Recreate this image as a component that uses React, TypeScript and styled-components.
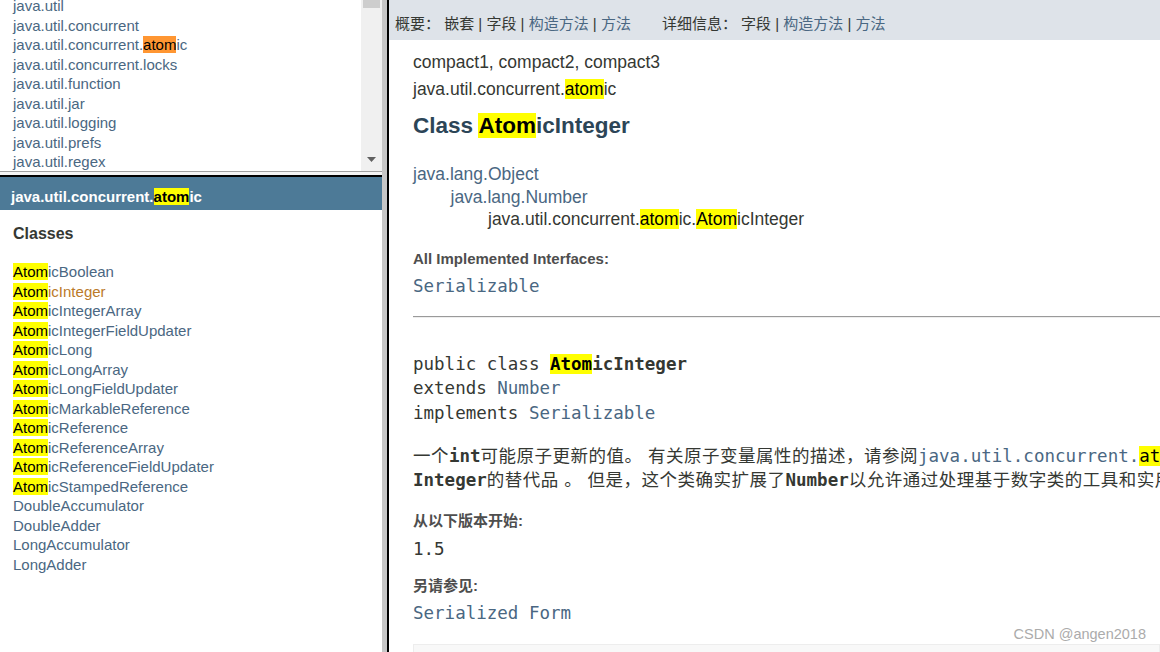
import React from "react";
import styled, { createGlobalStyle } from "styled-components";

const GlobalStyle = createGlobalStyle`
  html, body { margin: 0; padding: 0; background: #ffffff; }
  body {
    font-family: "Liberation Sans", Arial, "Noto Sans CJK SC", sans-serif;
    overflow: hidden;
  }
  #root { width: 1160px; height: 652px; }
`;

const SANS = `"Liberation Sans", Arial, "Noto Sans CJK SC", sans-serif`;
const MONO = `"DejaVu Sans Mono", "Noto Sans CJK SC", monospace`;
const LINK = "#4A6782";
const TEXT = "#353833";

const Page = styled.div`
  display: flex;
  width: 1160px;
  height: 652px;
  overflow: hidden;
  font-family: ${SANS};
`;

/* ---------- left frames ---------- */

const LeftFrame = styled.div`
  width: 382px;
  flex: none;
  display: flex;
  flex-direction: column;
`;

const TopFrame = styled.div`
  height: 171px;
  flex: none;
  display: flex;
  overflow: hidden;
  border-bottom: 1px solid #a0a0a0;
  background: #ffffff;
`;

const PkgList = styled.ul`
  list-style: none;
  margin: -4px 0 0;
  padding: 0 0 0 13px;
  flex: 1;
  min-width: 0;
`;

const PkgItem = styled.li`
  font-size: 15px;
  line-height: 19.5px;
  color: ${LINK};
  white-space: nowrap;
`;

const ScrollTrack = styled.div`
  width: 21px;
  flex: none;
  background: #f0f0f0;
  display: flex;
  flex-direction: column;
  justify-content: space-between;
  align-items: center;
`;

const ScrollThumb = styled.div`
  width: 17px;
  height: 8px;
  background: #cdcdcd;
`;

const ScrollArrow = styled.div`
  height: 21px;
  width: 21px;
  display: flex;
  align-items: center;
  justify-content: center;
  padding-bottom: 3px;
  box-sizing: border-box;
`;

const HSplit = styled.div`
  height: 3px;
  flex: none;
  background: #f4f4f4;
  border-bottom: 2px solid #000000;
`;

const BottomFrame = styled.div`
  flex: 1;
  background: #ffffff;
  overflow: hidden;
`;

const FrameHeader = styled.div`
  height: 33px;
  box-sizing: border-box;
  background: #4d7a97;
  color: #ffffff;
  font-weight: bold;
  font-size: 15px;
  line-height: 18px;
  padding: 11px 0 0 11px;
  white-space: nowrap;
`;

const ClassesTitle = styled.h2`
  margin: 14px 0 0 13px;
  font-size: 16px;
  line-height: 20px;
  font-weight: bold;
  color: ${TEXT};
`;

const ClassList = styled.ul`
  list-style: none;
  margin: 18px 0 0;
  padding: 0 0 0 13px;
`;

const ClassItem = styled.li<{ $current?: boolean }>`
  font-size: 15px;
  line-height: 19.5px;
  color: ${(p) => (p.$current ? "#bb7a2a" : LINK)};
  white-space: nowrap;
`;

const VSplit = styled.div`
  width: 5px;
  flex: none;
  background: #c6c6c6;
  border-right: 2px solid #000000;
`;

/* ---------- right frame ---------- */

const RightFrame = styled.div`
  flex: 1;
  min-width: 0;
  overflow: hidden;
  position: relative;
  background: #ffffff;
`;

const SubNav = styled.div`
  height: 40px;
  box-sizing: border-box;
  background: #dee3e9;
  padding: 15px 0 0 6px;
  font-size: 15px;
  line-height: 18px;
  color: ${TEXT};
  white-space: nowrap;
  display: flex;
  gap: 31px;
`;

const NavGroup = styled.div`
  display: flex;
`;

const NavLink = styled.span<{ $link?: boolean }>`
  color: ${(p) => (p.$link ? LINK : TEXT)};
`;

const Content = styled.div`
  padding-left: 24px;
  white-space: nowrap;
`;

const SubTitle = styled.div<{ $gap: number }>`
  margin-top: ${(p) => p.$gap}px;
  font-size: 17.5px;
  line-height: 20px;
  color: ${TEXT};
`;

const Title = styled.h2`
  margin: 14px 0 0;
  font-size: 22.5px;
  line-height: 26px;
  font-weight: bold;
  color: #2c4557;
`;

const Tree = styled.div`
  margin-top: 24px;
  font-size: 17.5px;
  line-height: 22.5px;
`;

const TreeLine = styled.div<{ $level: number; $link?: boolean }>`
  padding-left: ${(p) => p.$level * 37.5}px;
  color: ${(p) => (p.$link ? LINK : TEXT)};
`;

const Term = styled.div<{ $gap: number }>`
  margin-top: ${(p) => p.$gap}px;
  font-size: 15px;
  line-height: 18px;
  font-weight: bold;
  color: #4e4e4e;
`;

const Def = styled.div<{ $gap: number; $link?: boolean }>`
  margin-top: ${(p) => p.$gap}px;
  font-family: ${MONO};
  font-size: 17.5px;
  line-height: 22px;
  color: ${(p) => (p.$link ? LINK : TEXT)};
`;

const Rule = styled.hr`
  margin: 19px 0 0;
  height: 0;
  border: none;
  border-top: 1px solid #9a9a9a;
  border-bottom: 1px solid #eeeeee;
`;

const Pre = styled.pre`
  margin: 34px 0 0;
  font-family: ${MONO};
  font-size: 17.5px;
  line-height: 24.5px;
  color: ${TEXT};
`;

const Strong = styled.b`
  font-weight: bold;
`;

const CodeLink = styled.span`
  color: ${LINK};
`;

const Block = styled.div`
  margin-top: 19px;
  font-size: 17.5px;
  line-height: 24px;
  letter-spacing: 0.5px;
  color: ${TEXT};
  font-family: ${SANS};
`;

const BlockLine = styled.div`
  white-space: nowrap;
`;

const Code = styled.code<{ $link?: boolean }>`
  font-family: ${MONO};
  font-size: 17.5px;
  letter-spacing: 0;
  font-weight: ${(p) => (p.$link ? "normal" : "bold")};
  color: ${(p) => (p.$link ? LINK : TEXT)};
`;

const SummaryBox = styled.div`
  margin-top: 20px;
  height: 60px;
  background: #f8f8f8;
  border: 1px solid #ededed;
`;

const Watermark = styled.div`
  position: absolute;
  right: 14px;
  top: 625px;
  font-size: 14.5px;
  line-height: 18px;
  color: #ababab;
  white-space: nowrap;
`;

const Mark = styled.span<{ $active?: boolean }>`
  background: ${(p) => (p.$active ? "#ff9632" : "#ffff00")};
  color: #000000;
`;

const packages = [
  "java.util",
  "java.util.concurrent",
  "ATOMIC",
  "java.util.concurrent.locks",
  "java.util.function",
  "java.util.jar",
  "java.util.logging",
  "java.util.prefs",
  "java.util.regex",
];

const atomicClasses = [
  "Boolean",
  "Integer",
  "IntegerArray",
  "IntegerFieldUpdater",
  "Long",
  "LongArray",
  "LongFieldUpdater",
  "MarkableReference",
  "Reference",
  "ReferenceArray",
  "ReferenceFieldUpdater",
  "StampedReference",
];

const otherClasses = ["DoubleAccumulator", "DoubleAdder", "LongAccumulator", "LongAdder"];

export default function App() {
  return (
    <>
      <GlobalStyle />
      <Page>
        <LeftFrame>
          <TopFrame>
            <PkgList>
              {packages.map((p) =>
                p === "ATOMIC" ? (
                  <PkgItem key={p}>
                    java.util.concurrent.<Mark $active>atom</Mark>ic
                  </PkgItem>
                ) : (
                  <PkgItem key={p}>{p}</PkgItem>
                )
              )}
            </PkgList>
            <ScrollTrack>
              <ScrollThumb />
              <ScrollArrow>
                <svg width="9" height="5" viewBox="0 0 9 5">
                  <path d="M0 0 H9 L4.5 5 Z" fill="#606060" />
                </svg>
              </ScrollArrow>
            </ScrollTrack>
          </TopFrame>
          <HSplit />
          <BottomFrame>
            <FrameHeader>
              java.util.concurrent.<Mark>atom</Mark>ic
            </FrameHeader>
            <ClassesTitle>Classes</ClassesTitle>
            <ClassList>
              {atomicClasses.map((c) => (
                <ClassItem key={c} $current={c === "Integer"}>
                  <Mark>Atom</Mark>ic{c}
                </ClassItem>
              ))}
              {otherClasses.map((c) => (
                <ClassItem key={c}>{c}</ClassItem>
              ))}
            </ClassList>
          </BottomFrame>
        </LeftFrame>
        <VSplit />
        <RightFrame>
          <SubNav>
            <NavGroup>
              <NavLink>概要：&nbsp;</NavLink>
              <NavLink>嵌套&nbsp;|&nbsp;</NavLink>
              <NavLink>字段&nbsp;|&nbsp;</NavLink>
              <NavLink $link>构造方法</NavLink>
              <NavLink>&nbsp;|&nbsp;</NavLink>
              <NavLink $link>方法</NavLink>
            </NavGroup>
            <NavGroup>
              <NavLink>详细信息：&nbsp;</NavLink>
              <NavLink>字段&nbsp;|&nbsp;</NavLink>
              <NavLink $link>构造方法</NavLink>
              <NavLink>&nbsp;|&nbsp;</NavLink>
              <NavLink $link>方法</NavLink>
            </NavGroup>
          </SubNav>
          <Content>
            <SubTitle $gap={12}>compact1, compact2, compact3</SubTitle>
            <SubTitle $gap={7}>
              java.util.concurrent.<Mark>atom</Mark>ic
            </SubTitle>
            <Title>
              Class <Mark>Atom</Mark>icInteger
            </Title>
            <Tree>
              <TreeLine $level={0} $link>
                java.lang.Object
              </TreeLine>
              <TreeLine $level={1} $link>
                java.lang.Number
              </TreeLine>
              <TreeLine $level={2}>
                java.util.concurrent.<Mark>atom</Mark>ic.<Mark>Atom</Mark>icInteger
              </TreeLine>
            </Tree>
            <Term $gap={19}>All Implemented Interfaces:</Term>
            <Def $gap={7} $link>
              Serializable
            </Def>
            <Rule />
            <Pre>
              {"public class "}
              <Strong>
                <Mark>Atom</Mark>icInteger
              </Strong>
              {"\nextends "}
              <CodeLink>Number</CodeLink>
              {"\nimplements "}
              <CodeLink>Serializable</CodeLink>
            </Pre>
            <Block>
              <BlockLine>
                一个<Code>int</Code>可能原子更新的值。 有关原子变量属性的描述，请参阅
                <Code $link>
                  java.util.concurrent.<Mark>atom</Mark>ic
                </Code>
                包规范。 <Code>AtomicInteger</Code>用于诸如以原子方式递增的计数器之类的应用程序中，并且不能用作
              </BlockLine>
              <BlockLine>
                <Code>Integer</Code>的替代品 。 但是，这个类确实扩展了<Code>Number</Code>
                以允许通过处理基于数字类的工具和实用程序进行统一访问。
              </BlockLine>
            </Block>
            <Term $gap={20}>从以下版本开始:</Term>
            <Def $gap={8}>1.5</Def>
            <Term $gap={17}>另请参见:</Term>
            <Def $gap={7} $link>
              Serialized Form
            </Def>
            <SummaryBox />
          </Content>
          <Watermark>CSDN @angen2018</Watermark>
        </RightFrame>
      </Page>
    </>
  );
}
